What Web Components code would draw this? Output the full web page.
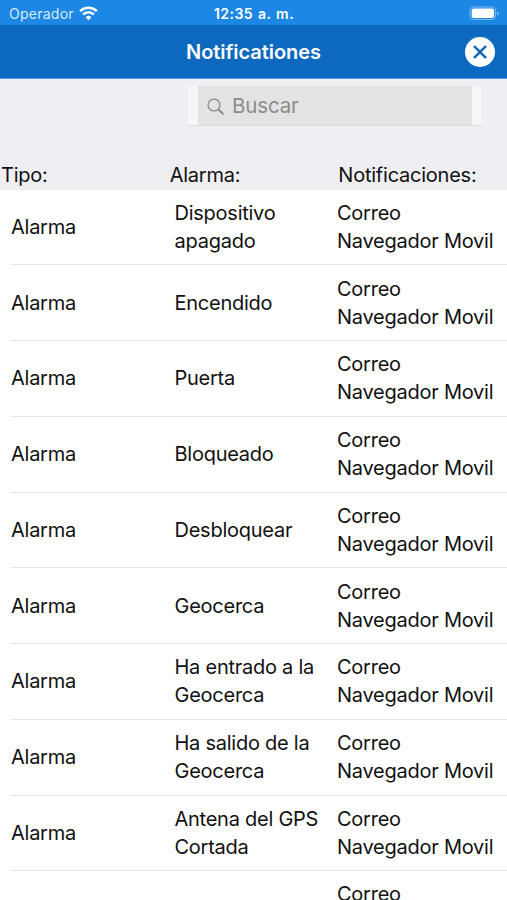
<!DOCTYPE html>
<html lang="es">
<head>
<meta charset="utf-8">
<title>Notificationes</title>
<style>
  body {
    margin: 0;
    height: 900px;
    overflow: hidden;
    background: #fff;
    color: #111;
    font-family: Inter, "Liberation Sans", sans-serif;
  }
</style>
</head>
<body>
<notifications-screen></notifications-screen>

<script>
function define(name, html, setup) {
  const template = document.createElement('template');
  template.innerHTML = html;
  customElements.define(name, class extends HTMLElement {
    constructor() {
      super();
      const shadow = this.attachShadow({ mode: 'open' });
      shadow.append(template.content.cloneNode(true));
      if (setup) setup(shadow);
    }
  });
}

define('status-bar', `
  <style>
  :host {
    display: grid;
    grid-template-columns: 1fr auto 1fr;
    align-items: center;
    height: 25px;
    padding: 2px 8px 0 9px;
    box-sizing: border-box;
    background: #1c87e5;
    color: #fff;
    font-size: 14px;
    line-height: 22px;
  }
  .carrier {
    display: flex;
    align-items: center;
    gap: 5px;
    color: #d5eaff;
    letter-spacing: 0.25px;
  }
  .time {
    font-weight: 600;
    letter-spacing: 0.45px;
    word-spacing: 1px;
  }
  .battery {
    justify-self: end;
  }
  svg {
    display: block;
  }
  </style>
  <div class="carrier">
    <span><slot name="carrier"></slot></span>
    <svg width="19" height="15" viewBox="0 0 19 15" fill="none" stroke="#fff" stroke-width="2.5">
      <path d="M1.1 5.2a12 12 0 0 1 16.8 0M4.1 8.5a7.8 7.8 0 0 1 10.8 0"/>
      <path d="M9.5 14.3l-2.9-3a4.1 4.1 0 0 1 5.8 0z" fill="#fff" stroke="none"/>
    </svg>
  </div>
  <span class="time"><slot name="time"></slot></span>
  <svg class="battery" width="30" height="15" viewBox="0 0 30 15">
    <rect x="1" y="1" width="25.5" height="12.5" rx="3.5" fill="none" stroke="#7fbcf2" stroke-width="1"/>
    <rect x="2.7" y="2.6" width="22.3" height="9.4" rx="2" fill="#fff"/>
    <path d="M28 5.2q1.7.6 1.7 2.1t-1.7 2.1z" fill="#7fbcf2"/>
  </svg>
`);

define('close-button', `
  <style>
  :host {
    display: block;
    width: 30px;
    height: 30px;
  }
  svg {
    display: block;
  }
  </style>
  <svg width="30" height="30" viewBox="0 0 30 30">
    <circle cx="15" cy="15" r="15" fill="#fff"/>
    <path d="M9.6 9.6l10.8 10.8M20.4 9.6L9.6 20.4" stroke="#1265b4" stroke-width="2.3" stroke-linecap="round"/>
  </svg>
`);

define('nav-bar', `
  <style>
  :host {
    display: grid;
    grid-template-columns: 1fr auto 1fr;
    align-items: center;
    height: 54px;
    padding: 0 12px;
    box-sizing: border-box;
    background: #0d69c0;
    border-bottom: 1px solid #529ade;
    color: #fff;
  }
  .title {
    grid-column: 2;
    padding-top: 1px;
    font-size: 20px;
    font-weight: 600;
    letter-spacing: -0.05px;
  }
  close-button {
    justify-self: end;
  }
  </style>
  <span class="title"><slot></slot></span>
  <close-button></close-button>
`);

define('search-field', `
  <style>
  :host {
    display: block;
    width: 294px;
    height: 40px;
    box-sizing: border-box;
    padding: 0 10px;
    background: #f6f6f8;
    border-bottom: 1px solid #dedee0;
  }
  .field {
    display: flex;
    align-items: center;
    gap: 7px;
    height: 39px;
    padding-left: 9px;
    background: #e3e3e3;
    color: #8c8c8e;
    font-size: 20.5px;
    line-height: 41px;
    letter-spacing: -0.15px;
  }
  svg {
    margin-top: 3px;
  }
  </style>
  <div class="field">
    <svg width="18" height="18" viewBox="0 0 18 18" fill="none" stroke="#8c8c8e">
      <circle cx="7" cy="7" r="5.9" stroke-width="1.3"/>
      <path d="M11.4 11.4l5 5" stroke-width="2"/>
    </svg>
    <span><slot></slot></span>
  </div>
`);

define('table-header', `
  <style>
  :host {
    display: grid;
    grid-template-columns: repeat(3, 1fr);
    font-size: 20px;
    line-height: 30px;
    letter-spacing: -0.23px;
    padding-left: 1px;
  }
  </style>
  <slot></slot>
`);

define('alarm-row', `
  <style>
  :host {
    display: grid;
    grid-template-columns: 163.5px 162.5px 1fr;
    align-items: center;
    height: 75.75px;
    margin-left: 11px;
    box-sizing: border-box;
    border-bottom: 1px solid #e6e6e8;
    font-size: 20px;
    line-height: 28px;
    letter-spacing: -0.25px;
  }
  .name {
    padding-right: 12px;
  }
  .channels {
    white-space: nowrap;
  }
  </style>
  <span>Alarma</span>
  <span class="name"><slot></slot></span>
  <div class="channels">
    <div>Correo</div>
    <div>Navegador Movil</div>
  </div>
`);

// the row that is only partly scrolled into view
define('partial-row', `
  <style>
  :host {
    display: grid;
    grid-template-columns: 163.5px 162.5px 1fr;
    height: 28.75px;
    margin-left: 11px;
    padding-top: 9px;
    box-sizing: border-box;
    overflow: hidden;
    font-size: 20px;
    line-height: 28px;
    letter-spacing: -0.25px;
  }
  span {
    grid-column: 3;
  }
  </style>
  <span><slot></slot></span>
`);

const alarms = [
  'Dispositivo apagado',
  'Encendido',
  'Puerta',
  'Bloqueado',
  'Desbloquear',
  'Geocerca',
  'Ha entrado a la Geocerca',
  'Ha salido de la Geocerca',
  'Antena del GPS Cortada'
];

define('notifications-screen', `
  <style>
  :host {
    display: block;
    height: 900px;
    overflow: hidden;
  }
  .top {
    height: 110.5px;
    box-sizing: border-box;
    padding-top: 7px;
    background: #efeef3;
  }
  search-field {
    margin-left: 188px;
  }
  table-header {
    margin-top: 34px;
  }
  </style>
  <status-bar>
    <span slot="carrier">Operador</span>
    <span slot="time">12:35 a. m.</span>
  </status-bar>
  <nav-bar>Notificationes</nav-bar>
  <div class="top">
    <search-field>Buscar</search-field>
    <table-header>
      <span>Tipo:</span>
      <span>Alarma:</span>
      <span>Notificaciones:</span>
    </table-header>
  </div>
  <div class="list"></div>
  <partial-row>Correo</partial-row>
`, shadow => {
  const list = shadow.querySelector('.list');
  alarms.forEach(name => {
    const row = document.createElement('alarm-row');
    row.textContent = name;
    list.append(row);
  });
});
</script>
</body>
</html>
